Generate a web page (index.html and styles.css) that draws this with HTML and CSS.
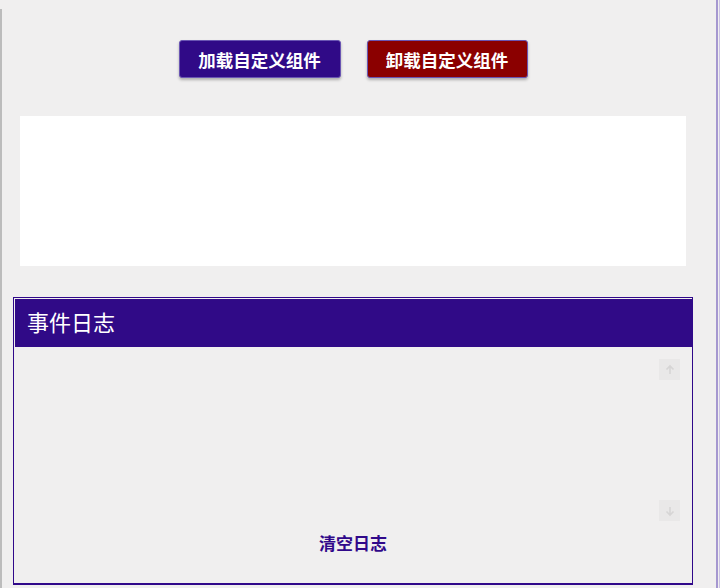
FILE: index.html
```html
<!DOCTYPE html>
<html lang="zh">
<head>
<meta charset="utf-8">
<link rel="stylesheet" href="styles.css">
</head>
<body>
<div class="page">
  <div class="lside"></div>
  <div class="main">
    <div class="column">
      <div class="actions">
        <button class="btn btn-load">加载自定义组件</button>
        <button class="btn btn-unload">卸载自定义组件</button>
      </div>
      <div class="host"></div>
      <section class="log">
        <header class="log-head">事件日志</header>
        <div class="log-body">
          <div class="log-area">
            <div class="log-list"></div>
            <div class="scroller">
              <span class="sbtn"><svg width="12" height="12" viewBox="0 0 12 12"><path d="M6 10V2M2.5 5.5L6 2l3.5 3.5" fill="none" stroke="#d6d5d5" stroke-width="1.6"/></svg></span>
              <span class="sbtn"><svg width="12" height="12" viewBox="0 0 12 12"><path d="M6 2v8M2.5 6.5L6 10l3.5-3.5" fill="none" stroke="#d6d5d5" stroke-width="1.6"/></svg></span>
            </div>
          </div>
          <button class="clear">清空日志</button>
        </div>
      </section>
    </div>
  </div>
  <div class="rside"><span class="r1"></span><span class="r2"></span></div>
</div>
</body>
</html>
```
FILE: styles.css
```css
html, body {
  margin: 0;
  padding: 0;
  background: #f0efef;
  font-family: "Noto Sans CJK SC", "Noto Sans", sans-serif;
}
.page {
  display: flex;
  height: 588px;
  overflow: hidden;
}
.lside {
  width: 2px;
  margin-top: 9px;
  background: #bcbcbc;
  flex: none;
}
.main {
  flex: 1;
  min-width: 0;
}
.column {
  width: 680px;
  margin-left: 11px;
  display: flex;
  flex-direction: column;
}
.actions {
  display: flex;
  justify-content: center;
  gap: 26px;
  margin-top: 40px;
}
.btn {
  height: 38px;
  width: 162px;
  padding: 0;
  border: 1px solid #6a55b3;
  border-radius: 3px;
  color: #fff;
  font-family: "Noto Sans CJK SC", sans-serif;
  font-size: 17.5px;
  font-weight: 700;
  box-shadow: 0 2px 3px rgba(0,0,0,0.28);
}
.btn-load { background: #300a87; }
.btn-unload { background: #8b0000; width: 161px; }
.host {
  margin: 38px 7px 0;
  height: 150px;
  background: #fff;
}
.log {
  margin-top: 31px;
  height: 285px;
  border: 1px solid #30088a;
  border-bottom-width: 2px;
  display: flex;
  flex-direction: column;
}
.log-head {
  margin-top: 1px;
  height: 48px;
  background: #300a87;
  color: #fff;
  font-size: 22px;
  line-height: 44px;
  padding-left: 12px;
  border-left: 1px solid #f0efef;
}
.log-body {
  flex: 1;
  display: flex;
  flex-direction: column;
  padding: 12px 12px 0 12px;
}
.log-area {
  display: flex;
  height: 162px;
}
.log-list { flex: 1; }
.scroller {
  width: 21px;
  display: flex;
  flex-direction: column;
  justify-content: space-between;
}
.sbtn {
  width: 21px;
  height: 21px;
  background: #e9e8e8;
  display: flex;
  align-items: center;
  justify-content: center;
}
.clear {
  align-self: center;
  margin-top: 10px;
  background: none;
  border: none;
  padding: 0;
  color: #30088a;
  font-family: "Noto Sans CJK SC", sans-serif;
  font-size: 17px;
  font-weight: 700;
  line-height: 24px;
}
.rside {
  width: 4px;
  flex: none;
  display: flex;
}
.r1 { width: 2px; background: #a597d0; }
.r2 { width: 1px; background: #f0efef; }
.rside::after { content: ""; width: 1px; background: #cbc3e4; }
```
